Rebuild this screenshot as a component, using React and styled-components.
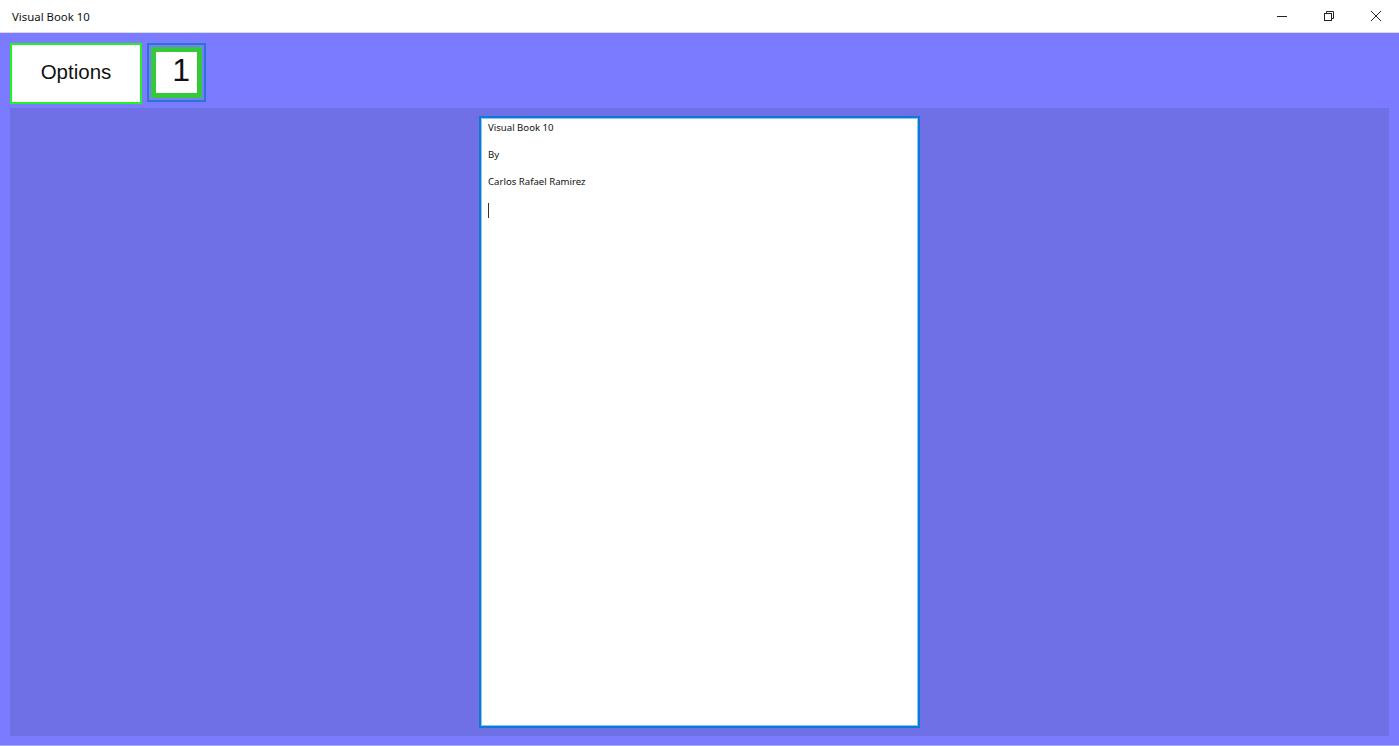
import React from 'react'
import styled, { createGlobalStyle } from 'styled-components'

const GlobalStyle = createGlobalStyle`
  html, body {
    margin: 0;
    padding: 0;
    height: 100%;
    overflow: hidden;
  }
  #root {
    height: 100%;
  }
`

const Window = styled.div`
  display: flex;
  flex-direction: column;
  width: 1399px;
  height: 746px;
  background: #ffffff;
  font-family: 'Noto Sans', 'Open Sans', sans-serif;
`

const TitleBar = styled.div`
  display: flex;
  align-items: center;
  height: 32px;
  flex-shrink: 0;
  border-bottom: 1px solid #d9d9f5;
  background: #ffffff;
`

const TitleText = styled.div`
  flex: 1;
  padding-left: 12px;
  font-size: 11.4px;
  color: #111;
  font-family: 'Noto Sans', 'Open Sans', sans-serif;
`

const Controls = styled.div`
  display: flex;
  height: 100%;
`

const ControlButton = styled.div`
  width: 47px;
  height: 100%;
  display: flex;
  align-items: center;
  justify-content: center;
  color: #222;
`

const Main = styled.div`
  flex: 1;
  display: flex;
  flex-direction: column;
  background: #7b7bff;
  padding: 10px 10px 9px 10px;
  border-bottom: 1px solid #a9a9ff;
  min-height: 0;
`

const Toolbar = styled.div`
  display: flex;
  align-items: flex-start;
  gap: 5px;
  height: 60px;
  flex-shrink: 0;
`

const OptionsButton = styled.button`
  width: 132px;
  height: 61px;
  box-sizing: border-box;
  border: 2px solid #22f222;
  background: #ffffff;
  font-family: 'Liberation Sans', Arial, sans-serif;
  font-size: 20.5px;
  color: #111;
  padding: 0 0 4px 0;
  cursor: pointer;
`

const PageFrame = styled.div`
  width: 59px;
  height: 59px;
  box-sizing: border-box;
  border: 2px solid #2a74d8;
  padding: 2px;
`

const PageNumber = styled.div`
  width: 100%;
  height: 100%;
  box-sizing: border-box;
  border: 5px solid #33c93a;
  background: #ffffff;
  display: flex;
  align-items: center;
  justify-content: flex-end;
  padding-right: 7px;
  padding-bottom: 4px;
  font-family: 'Liberation Sans', Arial, sans-serif;
  font-size: 32px;
  color: #111;
`

const Panel = styled.div`
  flex: 1;
  margin-top: 5px;
  background: #6f6fe6;
  display: flex;
  align-items: center;
  justify-content: center;
  min-height: 0;
`

const Page = styled.div`
  width: 441px;
  height: 612px;
  box-sizing: border-box;
  border: 2px solid #0a7ad6;
  box-shadow: inset 0 0 0 1px #8ec6f0;
  background: #ffffff;
  padding: 1px 7px 0;
  display: flex;
  flex-direction: column;
`

const Line = styled.div`
  font-size: 9.6px;
  line-height: 18px;
  height: 27px;
  color: #111;
  font-family: 'Noto Sans', 'Open Sans', sans-serif;
`

const Caret = styled.div`
  width: 1px;
  height: 15px;
  margin-top: 3px;
  background: #333;
`

const Minimize = () => (
  <svg width="12" height="12" viewBox="0 0 12 12">
    <path d="M1 6.5h10" stroke="currentColor" strokeWidth="1" />
  </svg>
)

const Restore = () => (
  <svg width="12" height="12" viewBox="0 0 12 12" fill="none" stroke="currentColor" strokeWidth="1">
    <rect x="1.5" y="3.5" width="7" height="7" />
    <path d="M3.5 3.5V1.5h7v7h-2" />
  </svg>
)

const Close = () => (
  <svg width="12" height="12" viewBox="0 0 12 12" stroke="currentColor" strokeWidth="1">
    <path d="M1 1l10 10M11 1L1 11" />
  </svg>
)

const App = () => {
  return (
    <>
      <GlobalStyle />
      <Window>
        <TitleBar>
          <TitleText>Visual Book 10</TitleText>
          <Controls>
            <ControlButton>
              <Minimize />
            </ControlButton>
            <ControlButton>
              <Restore />
            </ControlButton>
            <ControlButton>
              <Close />
            </ControlButton>
          </Controls>
        </TitleBar>
        <Main>
          <Toolbar>
            <OptionsButton>Options</OptionsButton>
            <PageFrame>
              <PageNumber>1</PageNumber>
            </PageFrame>
          </Toolbar>
          <Panel>
            <Page>
              <Line>Visual Book 10</Line>
              <Line>By</Line>
              <Line>Carlos Rafael Ramirez</Line>
              <Caret />
            </Page>
          </Panel>
        </Main>
      </Window>
    </>
  )
}

export default App
